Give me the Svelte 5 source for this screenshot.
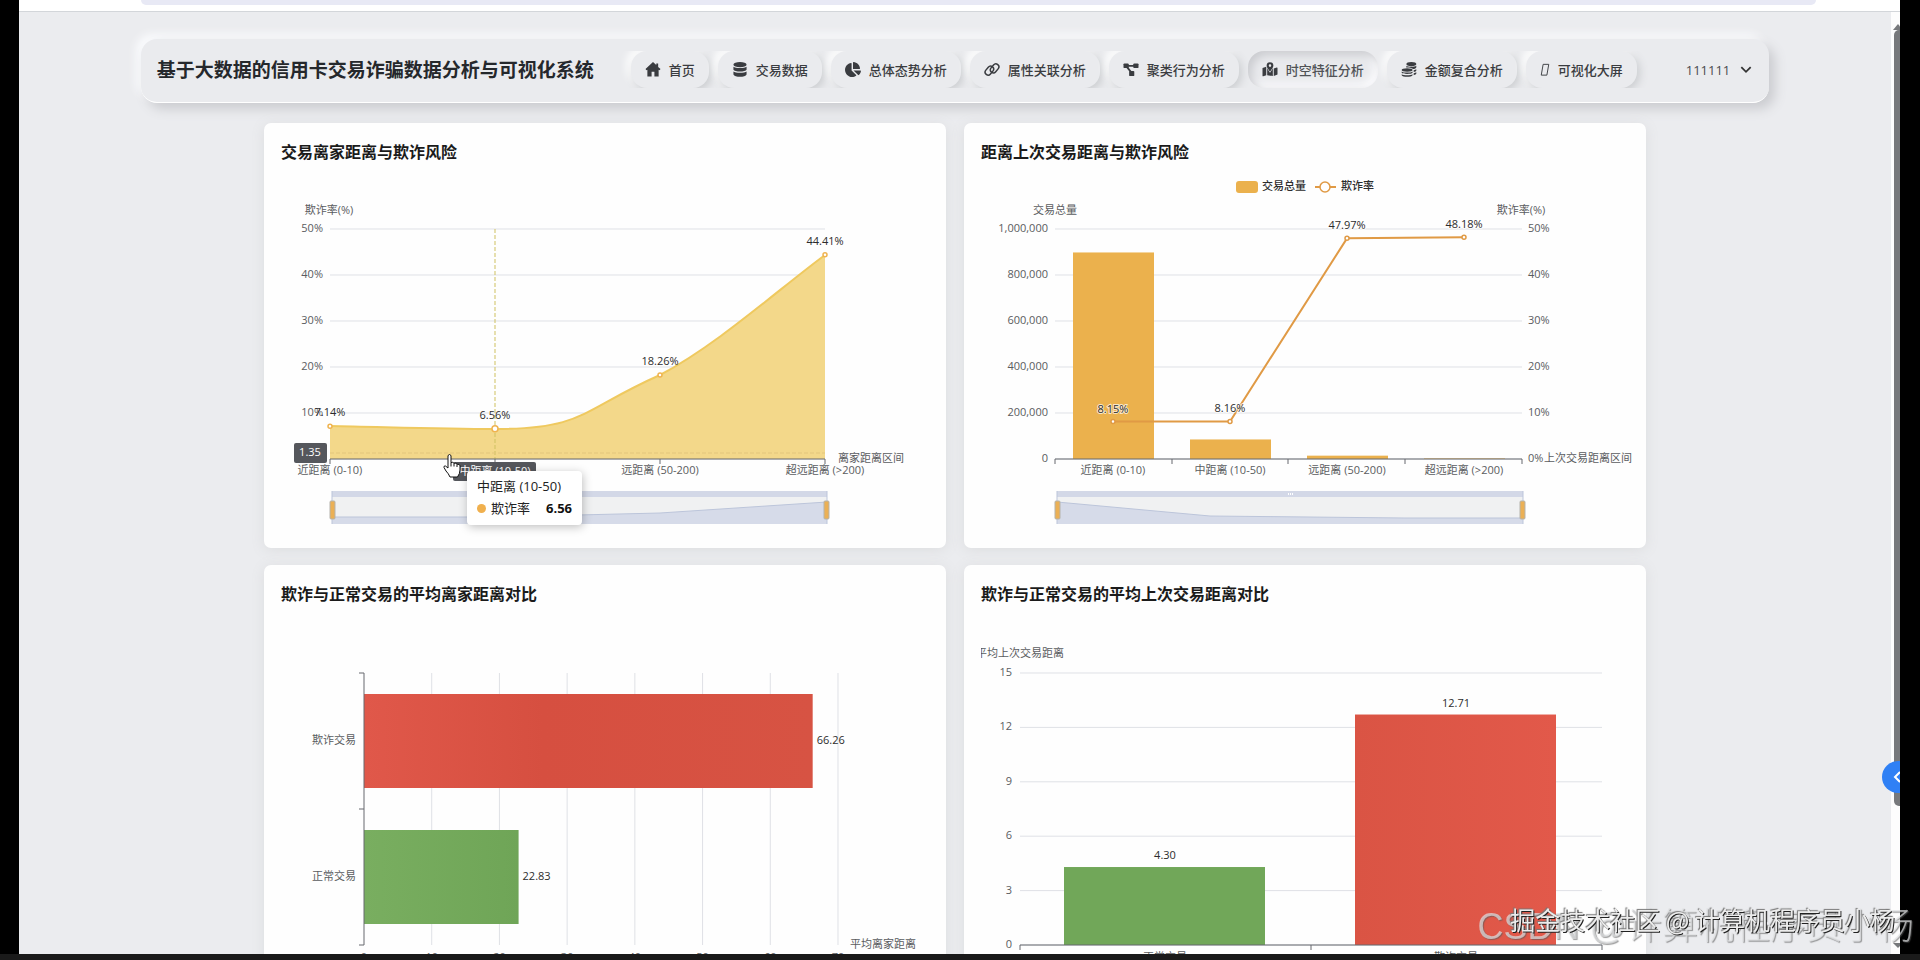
<script lang="ts">
  interface NavItem {
    icon: string;
    label: string;
  }

  const navItems: NavItem[] = [
    { icon: 'home', label: '首页' },
    { icon: 'database', label: '交易数据' },
    { icon: 'pie', label: '总体态势分析' },
    { icon: 'link', label: '属性关联分析' },
    { icon: 'nodes', label: '聚类行为分析' },
    { icon: 'map', label: '时空特征分析' },
    { icon: 'coins', label: '金额复合分析' },
    { icon: 'screen', label: '可视化大屏' },
  ];

  let active = $state('map');

  const ranges = ['近距离 (0-10)', '中距离 (10-50)', '远距离 (50-200)', '超远距离 (>200)'];

  // shared plot area of the two charts in the first row
  const top = 66;
  const bottom = 296;
  const rateY = (v: number) => bottom - (v / 50) * (bottom - top);
  const rateTicks = [0, 10, 20, 30, 40, 50];

  const homeRates = [7.14, 6.56, 18.26, 44.41];
  const homeX = (i: number) => 49 + i * 165;
  const homeCurve = 'C104 264 160 266 214 266 C304 266 300 247 379 212 C436 182 498 126 544 92';

  const lastRates = [8.15, 8.16, 47.97, 48.18];
  const lastTotals = [898000, 85000, 14500, 2500];
  const lastX = (i: number) => 132 + i * 117;
  const totalY = (v: number) => bottom - (v / 1000000) * (bottom - top);
  const lastLine = lastRates.map((v, i) => `${lastX(i)},${rateY(v)}`).join(' ');

  const homeAvg = [
    { name: '欺诈交易', value: 66.26, y: 89, fill: 'url(#red)' },
    { name: '正常交易', value: 22.83, y: 225, fill: 'url(#green)' },
  ];
  const homeAvgX = (v: number) => 83 + (v / 70) * 474;

  const lastAvg = [
    { name: '正常交易', value: 4.3, x: 83, fill: '#71a759' },
    { name: '欺诈交易', value: 12.71, x: 374, fill: 'url(#red-up)' },
  ];
  const lastAvgY = (v: number) => 340 - (v / 15) * 272;
</script>

<div class="frame">
  <div class="browser-bar"><div class="address"></div></div>
  <div class="viewport">
    <div class="page">
      <header class="navbar">
        <h1>基于大数据的信用卡交易诈骗数据分析与可视化系统</h1>
        <nav>
          {#each navItems as item}
            <button class="nav-btn" class:active={active === item.icon} onclick={() => (active = item.icon)}>
              {#if item.icon === 'home'}
                <svg class="icon" viewBox="0 0 16 16"><path d="M8 0 0 7.500 1 8.800 2 8.300V15.500h4.500V10.500h3v5H14V8.300l1 .5 1-1.300L13.500 5.200V1.500h-2v1.800z" /></svg>
              {:else if item.icon === 'database'}
                <svg class="icon" viewBox="0 0 16 16">
                  <ellipse cx="8" cy="2.800" rx="7" ry="2.800" />
                  <path d="M1 5C3 7 13 7 15 5V8.200c-1 2.600-13 2.600-14 0z" />
                  <path d="M1 10.200C3 12 13 12 15 10.200v3c-1 3.400-13 3.400-14 0z" />
                </svg>
              {:else if item.icon === 'pie'}
                <svg class="icon" viewBox="0 0 544 512">
                  <path d="M528 288H290l158 158c6 6 16 7 22 1 39-36 66-86 74-141 1-10-7-18-16-18zM512 223C504 104 408 8 289 0c-9-1-17 7-17 16v224h224c9 0 17-8 16-17zM224 288V51c0-10-8-18-18-16C87 51-4 156 0 280c5 128 115 233 243 232 50-1 97-17 135-44 8-6 9-17 2-24z" />
                </svg>
              {:else if item.icon === 'link'}
                <svg class="icon stroke" viewBox="0 0 16 16">
                  <rect x="-5.200" y="-3.200" width="10.400" height="6.400" rx="3.200" transform="translate(5.200 9.200) rotate(-50)" />
                  <rect x="-5.200" y="-3.200" width="10.400" height="6.400" rx="3.200" transform="translate(10.800 6.800) rotate(-50)" />
                </svg>
              {:else if item.icon === 'nodes'}
                <svg class="icon" viewBox="0 0 16 16">
                  <rect x="0" y="1.500" width="5.500" height="5" rx="1" />
                  <rect x="10.500" y="1.500" width="5.500" height="5" rx="1" />
                  <rect x="6" y="9.500" width="5.500" height="5.500" rx="1" />
                  <path d="M4 3.100h8v1.900H4zM3 6l1.800-1L9 10.500l-1.600 1z" />
                </svg>
              {:else if item.icon === 'map'}
                <svg class="icon" viewBox="0 0 16 16">
                  <path d="M0 6.500 4 5v9L.8 15.200Q0 15.400 0 14.600zM12 7l3.200-1.200q.8-.2.8.6v7L12 15zM5 6.500q.8 2.300 3 4.900 2.200-2.600 3-4.900V15l-6-1z" />
                  <path fill-rule="evenodd" d="M8 .2a3.600 3.600 0 0 1 3.600 3.600c0 2.400-3.600 6.400-3.600 6.400s-3.600-4-3.600-6.400A3.600 3.600 0 0 1 8 .2zm0 2.300a1.300 1.300 0 1 0 0 2.700 1.300 1.300 0 0 0 0-2.700z" />
                </svg>
              {:else if item.icon === 'coins'}
                <svg class="icon" viewBox="0 0 16 16">
                  <ellipse cx="10.500" cy="2.200" rx="5.300" ry="2.200" />
                  <path d="M5.200 4c1.500 1.500 9 1.500 10.600 0v1.500c0 1.200-2 1.800-3.500 2C10 6 7.500 5.900 5.200 6zM13 8.700c1-.2 2.300-.6 2.800-1.100V9c0 .8-1.300 1.400-2.800 1.700zM13 12c1-.2 2.300-.6 2.800-1.100v1.400c0 .8-1.300 1.400-2.800 1.700z" />
                  <ellipse cx="6" cy="8.500" rx="5.800" ry="1.800" />
                  <path d="M.2 10c1.500 1.700 10.100 1.700 11.600 0v1.500c-1 1.700-10.600 1.700-11.600 0zM.2 13c1.500 1.500 10.100 1.500 11.600 0v1c-1 2.400-10.600 2.400-11.600 0z" />
                </svg>
              {:else}
                <svg class="icon thin" viewBox="0 0 10 16"><path d="M3 2.500h6L7 14H1z" /></svg>
              {/if}
              <span>{item.label}</span>
            </button>
          {/each}
        </nav>
        <button class="user">
          111111
          <svg viewBox="0 0 12 12"><path d="M2 3.500 6 7.500 10 3.500" /></svg>
        </button>
      </header>

      <main>
        <section class="card">
          <h2>交易离家距离与欺诈风险</h2>
          <div class="chart">
            <svg viewBox="0 0 648 385">
              <g class="grid">
                {#each rateTicks as t}
                  <line x1="49" x2="544" y1={rateY(t)} y2={rateY(t)} />
                {/each}
              </g>
              <g class="label end">
                {#each rateTicks.slice(1) as t}
                  <text x="42" y={rateY(t) + 3}>{t}%</text>
                {/each}
              </g>
              <text class="label mid" x="48" y="51">欺诈率(%)</text>
              <path class="area" d="M49 263 {homeCurve} V296 H49z" />
              <path class="area-line" d="M49 263 {homeCurve}" />
              <line class="pointer" x1="214" x2="214" y1="66" y2="296" />
              <line class="pointer faint" x1="49" x2="544" y1="290" y2="290" />
              <line class="axis" x1="49" x2="544" y1="296" y2="296" />
              {#each homeRates as rate, i}
                <line class="axis" x1={homeX(i)} x2={homeX(i)} y1="296" y2="301" />
                <circle class="dot yellow" cx={homeX(i)} cy={rateY(rate)} r={i === 1 ? 3 : 2} />
                <text class="value mid" x={homeX(i)} y={rateY(rate) - 10}>{rate}%</text>
                <text class="label mid" x={homeX(i)} y="311">{ranges[i]}</text>
              {/each}
              <text class="label" x="557" y="299">离家距离区间</text>

              <rect class="badge" x="13" y="280" width="33" height="20" rx="2" />
              <text class="badge-text mid" x="29" y="293">1.35</text>
              <rect class="badge" x="172" y="299" width="83" height="19" rx="2" />
              <text class="badge-text mid" x="214" y="312">中距离 (10-50)</text>

              <g class="zoom">
                <rect class="zoom-body" x="51" y="328" width="495" height="33" />
                <rect class="zoom-bar" x="51" y="328" width="495" height="6" />
                <path class="zoom-shadow" d="M51 354 L214 354 L379 350 L546 339 V361 H51z" />
                <path class="zoom-line" d="M51 354 L214 354 L379 350 L546 339 M51 328V361M546 328V361" />
                <rect class="handle" x="49" y="338" width="5" height="18" rx="1" />
                <rect class="handle" x="543" y="338" width="5" height="18" rx="1" />
              </g>
            </svg>
            <div class="tooltip">
              <div>中距离 (10-50)</div>
              <div class="tooltip-row"><i></i><span>欺诈率</span><b>6.56</b></div>
            </div>
            <svg class="cursor" viewBox="0 0 18 25">
              <path d="M5 2.500q1.500-2 3 0V9.500q2-.8 3 .8 2-.6 3 .9 2.500-.4 3 1.600V17q0 3.500-2.500 7H7Q5.500 20.500 3 18L1 14.500q-.4-2 1.500-1.500L5 15z" />
              <path d="M8 9.500v4M11 10.500v3M14 11.500v2.500" />
            </svg>
          </div>
        </section>

        <section class="card">
          <h2>距离上次交易距离与欺诈风险</h2>
          <div class="chart">
            <svg class="spill" viewBox="0 0 648 385">
              <rect class="bar" x="255" y="18" width="22" height="12" rx="3" />
              <text class="value" x="281" y="27">交易总量</text>
              <line class="rate-line" x1="334" x2="355" y1="24" y2="24" />
              <circle class="dot orange" cx="344" cy="24" r="5" />
              <text class="value" x="360" y="27">欺诈率</text>

              <g class="grid">
                {#each rateTicks as t}
                  <line x1="74" x2="541" y1={rateY(t)} y2={rateY(t)} />
                {/each}
              </g>
              {#each rateTicks as t}
                <text class="label end" x="67" y={rateY(t) + 3}>{(t * 20000).toLocaleString('en-US')}</text>
                <text class="label" x="547" y={rateY(t) + 3}>{t}%</text>
              {/each}
              <text class="label mid" x="74" y="51">交易总量</text>
              <text class="label mid" x="540" y="51">欺诈率(%)</text>
              <text class="label" x="563" y="299">上次交易距离区间</text>

              {#each lastTotals as total, i}
                <rect class="bar" x={lastX(i) - 40} y={totalY(total)} width="81" height={bottom - totalY(total)} />
                <text class="label mid" x={lastX(i)} y="311">{ranges[i]}</text>
              {/each}
              <path class="axis" d="M74 301V296H541V301M191 296v5M307 296v5M424 296v5" />
              <polyline class="rate-line" points={lastLine} />
              {#each lastRates as rate, i}
                <circle class="dot orange" cx={lastX(i)} cy={rateY(rate)} r="2" />
                <text class="value halo mid" x={lastX(i)} y={rateY(rate) - 9}>{rate}%</text>
              {/each}

              <g class="zoom">
                <rect class="zoom-body" x="76" y="328" width="466" height="33" />
                <rect class="zoom-bar" x="76" y="328" width="466" height="6" />
                <path class="zoom-shadow" d="M76 339 L229 353 L424 355 H542 V361 H76z" />
                <path class="zoom-line" d="M76 339 L229 353 L424 355 H542 M76 328V361M542 328V361" />
                <path class="grip" d="M307 331h5" />
                <rect class="handle" x="74" y="338" width="5" height="18" rx="1" />
                <rect class="handle" x="539" y="338" width="5" height="18" rx="1" />
              </g>
            </svg>
          </div>
        </section>

        <section class="card">
          <h2>欺诈与正常交易的平均离家距离对比</h2>
          <div class="chart">
            <svg viewBox="0 0 648 385">
              <defs>
                <linearGradient id="red"><stop offset="0" stop-color="#e0584a" /><stop offset=".4" stop-color="#d64f40" /><stop offset="1" stop-color="#d75343" /></linearGradient>
                <linearGradient id="green"><stop offset="0" stop-color="#79ae60" /><stop offset="1" stop-color="#6fa557" /></linearGradient>
                <linearGradient id="red-up"><stop offset="0" stop-color="#da5444" /><stop offset="1" stop-color="#e2594a" /></linearGradient>
              </defs>
              <g class="grid">
                {#each [10, 20, 30, 40, 50, 60, 70] as t}
                  <line x1={homeAvgX(t)} x2={homeAvgX(t)} y1="68" y2="340" />
                {/each}
              </g>
              {#each homeAvg as row}
                <rect x="83" y={row.y} width={homeAvgX(row.value) - 83} height="94" fill={row.fill} />
                <text class="label end" x="75" y={row.y + 50}>{row.name}</text>
                <text class="value" x={homeAvgX(row.value) + 4} y={row.y + 50}>{row.value}</text>
              {/each}
              <path class="axis" d="M78 68H83V340H78M78 204h5" />
              {#each [0, 10, 20, 30, 40, 50, 60, 70] as t}
                <text class="label mid" x={homeAvgX(t)} y="356">{t}</text>
              {/each}
              <text class="label" x="569" y="343">平均离家距离</text>
            </svg>
          </div>
        </section>

        <section class="card">
          <h2>欺诈与正常交易的平均上次交易距离对比</h2>
          <div class="chart">
            <svg viewBox="0 0 648 385">
              <g class="grid">
                {#each [0, 3, 6, 9, 12, 15] as t}
                  <line x1="39" x2="621" y1={lastAvgY(t)} y2={lastAvgY(t)} />
                {/each}
              </g>
              {#each [0, 3, 6, 9, 12, 15] as t}
                <text class="label end" x="31" y={lastAvgY(t) + 3}>{t}</text>
              {/each}
              <text class="label mid" x="39" y="52">平均上次交易距离</text>
              {#each lastAvg as col}
                <rect x={col.x} y={lastAvgY(col.value)} width="201" height={340 - lastAvgY(col.value)} fill={col.fill} />
                <text class="value mid" x={col.x + 101} y={lastAvgY(col.value) - 8}>{col.value.toFixed(2)}</text>
                <text class="label mid" x={col.x + 101} y="356">{col.name}</text>
              {/each}
              <path class="axis" d="M39 345V340H621V345M330 340v5" />
            </svg>
          </div>
        </section>
      </main>
    </div>
    <div class="scrollbar">
      <svg viewBox="0 0 10 8"><path d="M3 8 8 2l5 6z" /></svg>
      <div class="thumb"></div>
      <svg viewBox="0 0 10 8"><path d="M3 1h10L8 6z" /></svg>
    </div>
    <button class="side-toggle" aria-label="展开">
      <svg viewBox="0 0 12 12"><path d="M8 1 3 6l5 5" /></svg>
    </button>
  </div>
  <div class="mark csdn">CSDN @计算机程序员小杨</div>
  <div class="mark juejin">掘金技术社区 @ 计算机程序员小杨</div>
</div>

<style>
  :global(body) {
    margin: 0;
    background: #000;
  }

  .frame {
    position: relative;
    box-sizing: border-box;
    height: 100vh;
    overflow: hidden;
    display: flex;
    flex-direction: column;
    padding: 0 20px 0 19px;
    border-bottom: 6px solid #1a1a1a;
    background: #000;
    font-family: 'Open Sans', 'Noto Sans CJK SC', sans-serif;
    color: #333;
  }

  .browser-bar {
    flex: none;
    height: 11px;
    padding: 0 84px 0 122px;
    background: #fff;
    border-bottom: 1px solid #d3d6da;
  }

  .address {
    height: 5px;
    background: #e8e9f5;
    border-radius: 0 0 10px 10px;
  }

  .viewport {
    position: relative;
    flex: 1;
    min-height: 0;
    display: flex;
    overflow: hidden;
  }

  .page {
    flex: 1;
    overflow: hidden;
    padding: 27px 0 0;
    background: #ebecef;
  }

  .navbar {
    box-sizing: border-box;
    display: flex;
    align-items: center;
    width: 87%;
    height: 64px;
    margin: 0 auto;
    padding: 0 16px 2px;
    background: #eaebee;
    border-bottom: 1px solid #fff;
    border-radius: 16px;
    box-shadow: 6px 6px 12px #cbccd0, -5px -5px 8px #fafbfd;
  }

  h1 {
    flex: none;
    margin: 0;
    font-size: 19px;
    line-height: 28px;
    color: #25282c;
  }

  nav {
    flex: none;
    display: flex;
    gap: 9px;
    margin-left: 27px;
    padding: 0 12px 0 10px;
    overflow: hidden;
  }

  button {
    border: 0;
    background: none;
    font-family: inherit;
    cursor: pointer;
  }

  .nav-btn {
    display: flex;
    align-items: center;
    gap: 8px;
    height: 37px;
    padding: 0 14px;
    border-radius: 16px;
    background: #eaebee;
    box-shadow: 3px 3px 8px #ccced1, -4px -4px 8px #fff;
    font-size: 13px;
    font-weight: 500;
    color: #3a3c40;
    white-space: nowrap;
  }

  .nav-btn.active {
    color: #505256;
    background: #e9eaed;
    box-shadow: inset 4px 4px 8px #cbccd0, inset -4px -4px 8px #fcfcfe;
  }

  .icon {
    width: 16px;
    height: 15px;
    fill: #3a3c40;
  }

  .icon.stroke {
    fill: none;
    stroke: #3a3c40;
    stroke-width: 1.6;
  }

  .icon.thin {
    width: 10px;
    fill: none;
    stroke: #3a3c40;
    stroke-width: 1;
  }

  .user {
    display: flex;
    align-items: center;
    gap: 9px;
    margin-left: auto;
    padding: 0;
    font-size: 13px;
    color: #4a4c50;
  }

  .user svg {
    width: 14px;
    height: 14px;
    fill: none;
    stroke: #333;
    stroke-width: 1.5;
  }

  main {
    display: grid;
    grid-template-columns: 1fr 1fr;
    gap: 17px 18px;
    max-width: 1382px;
    margin: 20px auto 0;
  }

  .card {
    padding: 18px 17px 0;
    background: #fefefe;
    border-radius: 7px;
    box-shadow: 0 2px 14px #dcdddf;
  }

  h2 {
    margin: 0;
    font-size: 16px;
    line-height: 22px;
    color: #1b1b1b;
  }

  .chart {
    position: relative;
  }

  .chart > svg {
    display: block;
    width: 100%;
  }

  .chart > .spill {
    overflow: visible;
  }

  .grid line {
    stroke: #dfe1e6;
  }

  .axis {
    fill: none;
    stroke: #66686e;
  }

  text {
    font-size: 11px;
  }

  .label {
    fill: #5a5c60;
  }

  .value {
    fill: #2c2c2c;
    font-weight: 500;
  }

  .halo {
    paint-order: stroke;
    stroke: #fff;
    stroke-width: 2px;
    stroke-opacity: 0.7;
  }

  .mid {
    text-anchor: middle;
  }

  .end {
    text-anchor: end;
  }

  .area {
    fill: #f3d88a;
  }

  .area-line {
    fill: none;
    stroke: #efc95f;
    stroke-width: 2;
  }

  .pointer {
    stroke: #cfc160;
    stroke-dasharray: 4 2;
  }

  .pointer.faint {
    stroke: #e3c67c;
  }

  .dot {
    fill: #fff;
    stroke-width: 1.5;
  }

  .dot.yellow {
    stroke: #efb350;
  }

  .dot.orange {
    stroke: #e09a45;
  }

  .bar {
    fill: #ebb14d;
  }

  .rate-line {
    fill: none;
    stroke: #e09a45;
    stroke-width: 2;
  }

  .badge {
    fill: #55575c;
  }

  .badge-text {
    fill: #fff;
  }

  .zoom-body {
    fill: #f0f1f2;
  }

  .zoom-bar {
    fill: #d3d8e7;
  }

  .zoom-shadow {
    fill: #d6dbe9;
  }

  .zoom-line {
    fill: none;
    stroke: #bcc5da;
  }

  .grip {
    stroke: #fff;
    stroke-width: 2;
    stroke-dasharray: 1 1;
  }

  .handle {
    fill: #ebb055;
    stroke: #b5b3ac;
  }

  .tooltip {
    position: absolute;
    top: 308px;
    left: 186px;
    padding: 4px 10px 6px;
    background: #fff;
    border-radius: 4px;
    box-shadow: 1px 2px 10px rgba(0, 0, 0, 0.25);
    font-size: 13px;
    line-height: 22px;
    color: #222;
    white-space: nowrap;
  }

  .tooltip-row {
    display: flex;
    align-items: center;
  }

  .tooltip-row i {
    width: 9px;
    height: 9px;
    margin-right: 5px;
    border-radius: 50%;
    background: #f0b04e;
  }

  .tooltip-row b {
    margin-left: 16px;
    color: #111;
  }

  .chart > .cursor {
    position: absolute;
    top: 290px;
    left: 162px;
    width: 18px;
    height: 25px;
    fill: #fff;
    stroke: #111;
  }

  .scrollbar {
    flex: none;
    display: flex;
    flex-direction: column;
    align-items: flex-end;
    width: 9px;
    padding: 10px 0 4px;
    background: #fdfdfd;
  }

  .scrollbar svg {
    width: 10px;
    height: 8px;
    fill: #77797c;
  }

  .thumb {
    flex: none;
    width: 6px;
    height: 776px;
    margin-bottom: auto;
    background: #77797c;
    border-radius: 5px 0 0 5px;
  }

  .side-toggle {
    position: absolute;
    top: 749px;
    right: -14px;
    width: 32px;
    height: 32px;
    padding: 10px;
    border-radius: 50%;
    background: #2f80f5;
  }

  .side-toggle svg {
    display: block;
    width: 12px;
    height: 12px;
    fill: none;
    stroke: #fff;
    stroke-width: 2;
  }

  .mark {
    position: fixed;
    white-space: nowrap;
    pointer-events: none;
  }

  .csdn {
    right: 6px;
    bottom: 8px;
    font: 300 36px/50px 'Liberation Sans', 'Noto Sans CJK SC', sans-serif;
    color: rgba(225, 226, 228, 0.7);
    text-shadow: 1px 1px 1px rgba(90, 90, 90, 0.6);
  }

  .juejin {
    right: 25px;
    bottom: 22px;
    font: 25px/38px 'Noto Sans CJK SC', sans-serif;
    color: #ececec;
    text-shadow: 1px 1px 0 #222, -1px -1px 1px #777;
  }
</style>
